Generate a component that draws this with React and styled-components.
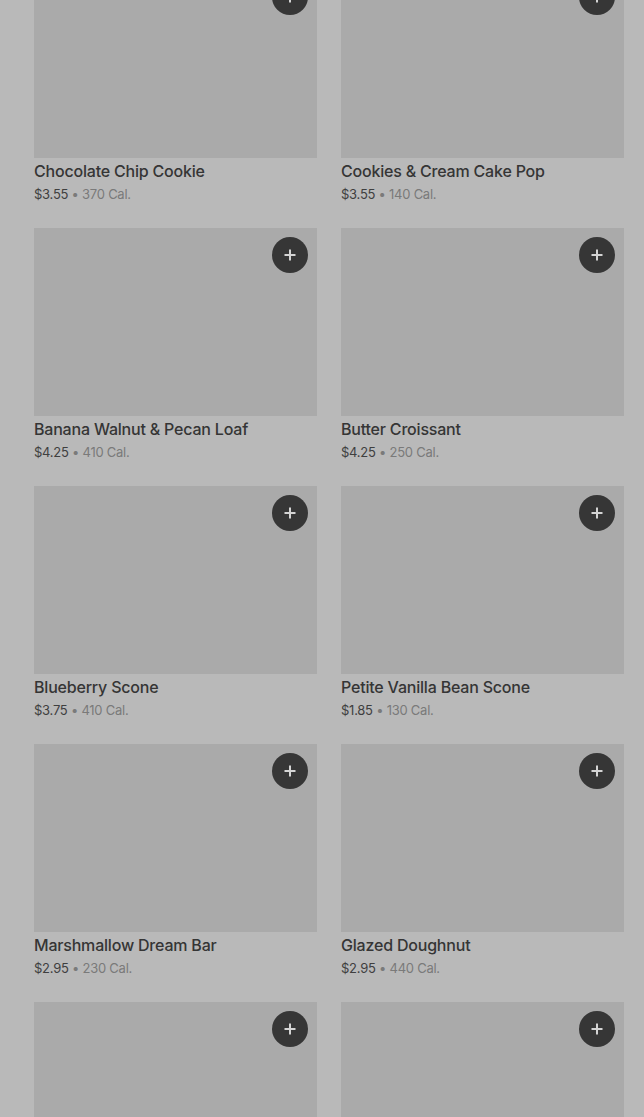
import { styled, createGlobalStyle } from "styled-components";

const GlobalStyle = createGlobalStyle`
  html, body {
    margin: 0;
    padding: 0;
    background: #b9b9b9;
    overflow: hidden;
    font-family: Inter, "Liberation Sans", sans-serif;
  }
`;

const Grid = styled.div`
  display: grid;
  grid-template-columns: 283px 283px;
  column-gap: 24px;
  row-gap: 24px;
  padding-left: 34px;
  margin-top: -30px;
`;

const Card = styled.div`
  display: flex;
  flex-direction: column;
`;

const Thumb = styled.div`
  position: relative;
  height: 188px;
  background-color: #aaaaaa;
`;

const AddButton = styled.button`
  position: absolute;
  top: 9px;
  right: 9px;
  width: 36px;
  height: 36px;
  border: none;
  border-radius: 50%;
  background-color: #363636;
  display: flex;
  align-items: center;
  justify-content: center;
  padding: 0;
`;

const Title = styled.div`
  margin-top: 2px;
  font-size: 16px;
  line-height: 22px;
  font-weight: 500;
  letter-spacing: -0.2px;
  color: #353535;
`;

const Meta = styled.div`
  margin-top: 2px;
  font-size: 13px;
  line-height: 20px;
  letter-spacing: -0.25px;
  color: #7a7a7a;
`;

const Price = styled.span`
  color: #3f3f3f;
`;

const items = [
  ["Chocolate Chip Cookie", "$3.55", "370"],
  ["Cookies & Cream Cake Pop", "$3.55", "140"],
  ["Banana Walnut & Pecan Loaf", "$4.25", "410"],
  ["Butter Croissant", "$4.25", "250"],
  ["Blueberry Scone", "$3.75", "410"],
  ["Petite Vanilla Bean Scone", "$1.85", "130"],
  ["Marshmallow Dream Bar", "$2.95", "230"],
  ["Glazed Doughnut", "$2.95", "440"],
  ["Cheese Danish", "$3.45", "290"],
  ["Plain Bagel", "$2.45", "280"],
];

const Plus = () => (
  <svg width="14" height="14" viewBox="0 0 14 14">
    <path d="M7 1.5v11M1.5 7h11" stroke="#d4d4d4" strokeWidth="2" />
  </svg>
);

const App = () => {
  return (
    <>
      <GlobalStyle />
      <Grid>
        {items.map(([name, price, cal]) => (
          <Card key={name}>
            <Thumb>
              <AddButton>
                <Plus />
              </AddButton>
            </Thumb>
            <Title>{name}</Title>
            <Meta>
              <Price>{price}</Price> • {cal} Cal.
            </Meta>
          </Card>
        ))}
      </Grid>
    </>
  );
};

export default App;
